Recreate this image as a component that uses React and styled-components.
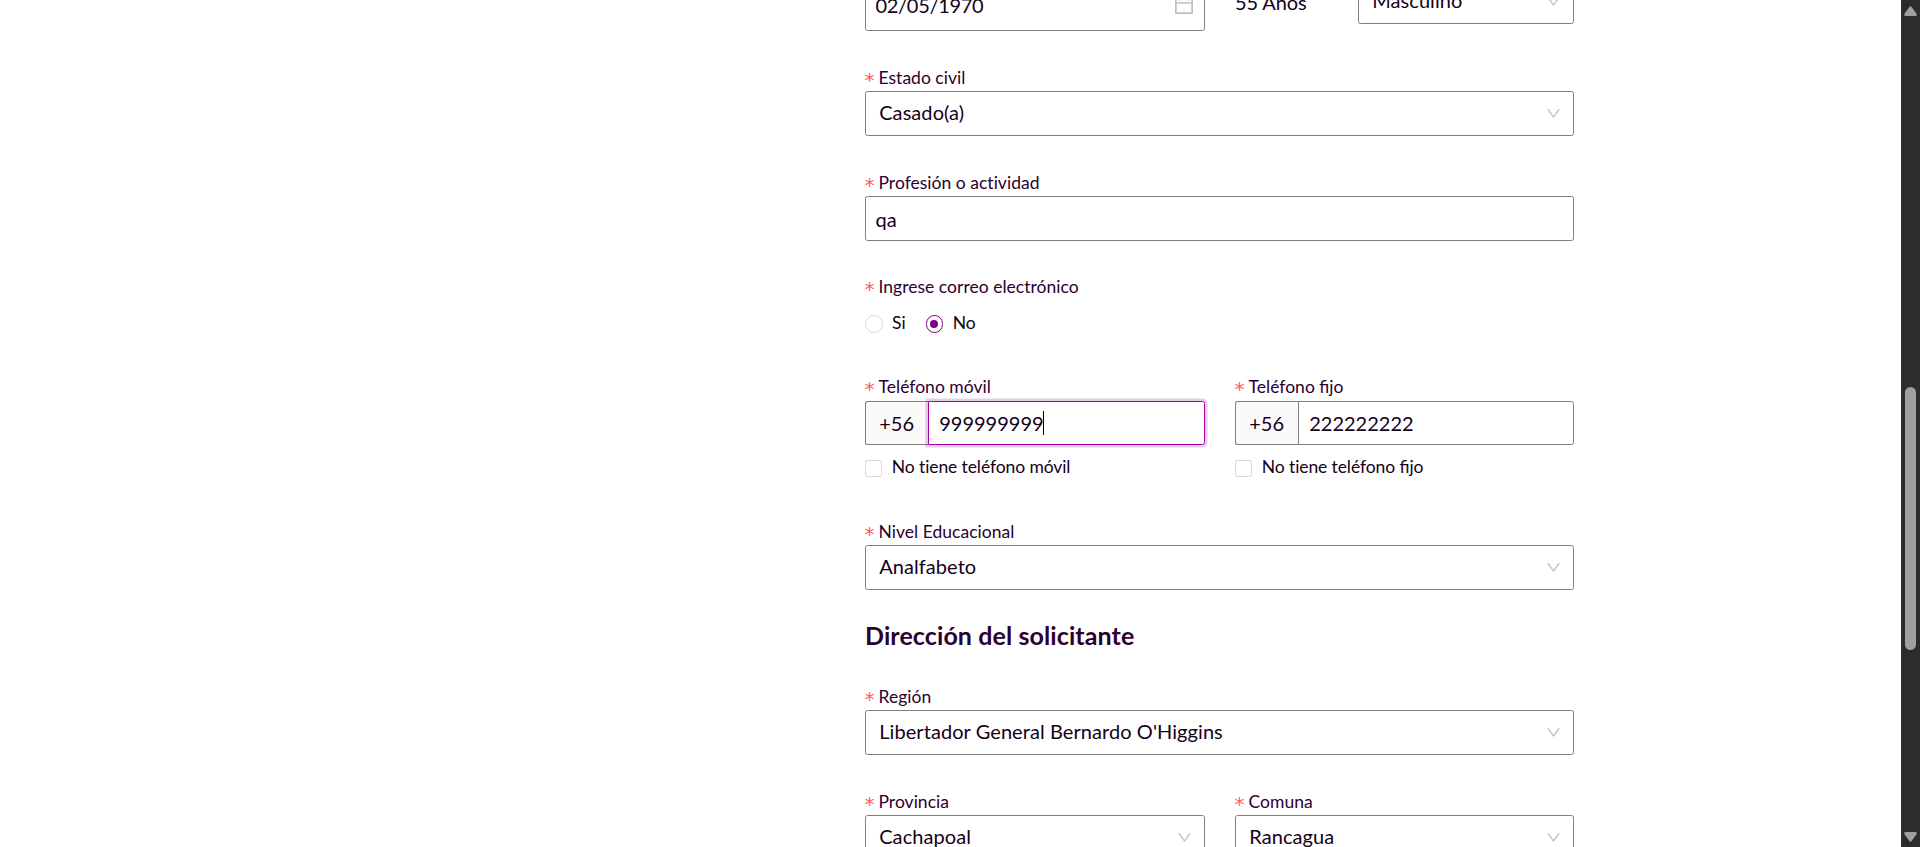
import React from "react";
import styled, { createGlobalStyle } from "styled-components";

const GlobalStyle = createGlobalStyle`
  * { box-sizing: border-box; }
  html, body { margin: 0; height: 100%; overflow: hidden; background: #fff; }
  body {
    font-family: Lato, "Open Sans", sans-serif;
    font-variant-ligatures: none;
    color: #150119;
  }
`;

const Page = styled.div`
  display: flex;
  height: 847px;
  overflow: hidden;
`;

const Content = styled.main`
  flex: 1;
  min-width: 0;
  height: 847px;
  overflow: hidden;
  padding-left: 865px;
`;

const Form = styled.form`
  width: 709px;
  margin-top: -21px;
  display: flex;
  flex-direction: column;
`;

const Row = styled.div`
  display: grid;
  grid-template-columns: 340px 339px;
  column-gap: 30px;
`;

const PersonRow = styled.div`
  display: grid;
  grid-template-columns: 340px 93px 216px;
  column-gap: 30px;
  align-items: start;
  height: 52px;
`;

const Field = styled.div`
  display: flex;
  flex-direction: column;
  min-width: 0;
  margin-top: ${(p) => p.$space || 0}px;
`;

const LabelRow = styled.label`
  display: flex;
  align-items: center;
  height: 24px;
  padding-top: 2px;
  margin-bottom: ${(p) => p.$gap ?? 2}px;
  font-size: 17.5px;
  line-height: 24px;
  letter-spacing: 0.02px;
  color: #2c0030;
  white-space: nowrap;
`;

const Required = styled.span`
  width: 14px;
  padding-top: 4px;
  font-family: "DejaVu Sans", sans-serif;
  font-size: 20px;
  line-height: 24px;
  color: #ff5c5f;
  margin-left: -0.5px;
`;

const Box = styled.div`
  display: flex;
  align-items: center;
  justify-content: space-between;
  height: ${(p) => p.$height || 45}px;
  padding: 0 ${(p) => p.$right ?? 12}px 0 ${(p) => p.$left ?? 13.2}px;
  border: 1px solid #7f7f7f;
  border-radius: 2.5px;
  background: #fff;
`;

const Value = styled.span`
  font-size: 20px;
  line-height: 24px;
  letter-spacing: ${(p) => p.$tracking || 0}px;
  padding-bottom: ${(p) => p.$lift ?? 4}px;
  white-space: nowrap;
`;

const Age = styled.span`
  padding-top: 11px;
  font-size: 20px;
  line-height: 24px;
  letter-spacing: -0.1px;
  white-space: nowrap;
`;

const Icon = styled.svg`
  flex: none;
  fill: #bfbfbf;
`;

const Options = styled.div`
  display: flex;
  align-items: flex-start;
  height: 24px;
`;

const Option = styled.label`
  display: flex;
  align-items: flex-start;
  gap: 9.5px;
  margin-right: 20px;
  font-size: 17.5px;
  line-height: 26px;
  white-space: nowrap;
`;

const CheckOption = styled(Option)`
  gap: 9.8px;
  margin-top: 9px;
  letter-spacing: -0.1px;
`;

const Ligated = styled.span`
  font-variant-ligatures: common-ligatures;
  letter-spacing: 0;
  white-space: pre;
`;

const Radio = styled.span`
  display: flex;
  align-items: center;
  justify-content: center;
  width: 17.5px;
  height: 17.5px;
  margin-top: 5px;
  border: 1px solid ${(p) => (p.$on ? "#7d0080" : "#d9d9d9")};
  border-radius: 50%;

  &::after {
    content: "";
    width: 8px;
    height: 8px;
    border-radius: 50%;
    background: ${(p) => (p.$on ? "#7d0080" : "transparent")};
  }
`;

const Check = styled.span`
  width: 17px;
  height: 17px;
  margin-top: 6px;
  border: 1px solid #d9d9d9;
  border-radius: 2px;
`;

const Group = styled.div`
  display: flex;
  height: 44px;
`;

const Addon = styled.div`
  display: flex;
  align-items: center;
  width: 63px;
  padding-left: 13.2px;
  border: 1px solid #7f7f7f;
  border-right: 0;
  border-radius: 2.5px 0 0 2.5px;
  background: #fafafa;
`;

const PhoneInput = styled.div`
  display: flex;
  align-items: center;
  flex: 1;
  padding-left: 10.2px;
  border: 1px solid ${(p) => (p.$focus ? "#a600a6" : "#7f7f7f")};
  border-radius: 0 2.5px 2.5px 0;
  box-shadow: ${(p) => (p.$focus ? "0 0 0 2.5px rgba(136, 0, 140, 0.2)" : "none")};
`;

const Caret = styled.span`
  width: 1px;
  height: 24px;
  margin-left: -1px;
  background: #000;
`;

const Heading = styled.h2`
  margin: 28px 0 0;
  height: 51px;
  font-size: 25px;
  line-height: 34px;
  font-weight: 700;
  letter-spacing: 0.1px;
  color: #2c0030;
`;

const Scrollbar = styled.aside`
  display: flex;
  flex-direction: column;
  align-items: center;
  width: 19px;
  height: 847px;
  padding: 6px 0 5px;
  background: #2c2c2c;
`;

const Thumb = styled.div`
  width: 11px;
  height: 263px;
  margin: 371px 0 auto;
  border-radius: 6px;
  background: #9f9f9f;
`;

const Arrow = ({ down }) => (
  <svg width="13" height="10" viewBox="0 0 13 10" fill="#9f9f9f">
    <path
      d="M5.2 1.2Q6.5-.5 7.8 1.2L12.5 7.8Q13.4 10 11.4 10H1.6Q-.4 10 .5 7.8Z"
      transform={down ? "rotate(180 6.5 5)" : undefined}
    />
  </svg>
);

const Chevron = () => (
  <Icon width="15" height="15" viewBox="64 64 896 896">
    <path d="M884 256h-75c-5.1 0-9.9 2.5-12.9 6.6L512 654.2 227.9 262.6c-3-4.1-7.8-6.6-12.9-6.6h-75c-6.5 0-10.3 7.4-6.5 12.7l352.6 486.1c12.8 17.6 39 17.6 51.7 0l352.6-486.1c3.9-5.3.1-12.7-6.4-12.7z" />
  </Icon>
);

const Calendar = () => (
  <Icon width="20" height="20" viewBox="64 64 896 896">
    <path d="M880 184H712v-64c0-4.4-3.6-8-8-8h-56c-4.4 0-8 3.6-8 8v64H384v-64c0-4.4-3.6-8-8-8h-56c-4.4 0-8 3.6-8 8v64H144c-17.7 0-32 14.3-32 32v664c0 17.7 14.3 32 32 32h736c17.7 0 32-14.3 32-32V216c0-17.7-14.3-32-32-32zm-40 656H184V460h656v380zM184 392V256h128v48c0 4.4 3.6 8 8 8h56c4.4 0 8-3.6 8-8v-48h256v48c0 4.4 3.6 8 8 8h56c4.4 0 8-3.6 8-8v-48h128v136H184z" />
  </Icon>
);

const Label = ({ children, gap }) => (
  <LabelRow $gap={gap}>
    <Required>*</Required>
    <span>{children}</span>
  </LabelRow>
);

const Select = ({ value }) => (
  <Box>
    <Value $tracking={0.07}>{value}</Value>
    <Chevron />
  </Box>
);

const Phone = ({ label, value, focus, none }) => (
  <Field $space={40}>
    <Label gap={3}>{label}</Label>
    <Group>
      <Addon>
        <Value $lift={1}>+56</Value>
      </Addon>
      <PhoneInput $focus={focus}>
        <Value $lift={1}>{value}</Value>
        {focus && <Caret />}
      </PhoneInput>
    </Group>
    <Options>
      <CheckOption>
        <Check />
        <span>{none}</span>
      </CheckOption>
    </Options>
  </Field>
);

export default function App() {
  return (
    <>
      <GlobalStyle />
      <Page>
        <Content>
          <Form>
            <PersonRow>
              <Box $height={52} $left={9.5} $right={10}>
                <Value $lift={0} $tracking={-0.3}>02/05/1970</Value>
                <Calendar />
              </Box>
              <Age>55 Años</Age>
              <Select value="Masculino" />
            </PersonRow>
            <Field $space={34}>
              <Label>Estado civil</Label>
              <Select value="Casado(a)" />
            </Field>
            <Field $space={34}>
              <Label>Profesión o actividad</Label>
              <Box $left={9.5}>
                <Value $lift={0}>qa</Value>
              </Box>
            </Field>
            <Field $space={33}>
              <Label gap={12}>Ingrese correo electrónico</Label>
              <Options>
                <Option>
                  <Radio />
                  Si
                </Option>
                <Option>
                  <Radio $on />
                  No
                </Option>
              </Options>
            </Field>
            <Row>
              <Phone label="Teléfono móvil" value="999999999" focus none="No tiene teléfono móvil" />
              <Phone
                label={<>Teléfono <Ligated>fijo</Ligated></>}
                value="222222222"
                none={<>No tiene teléfono <Ligated>fijo</Ligated></>}
              />
            </Row>
            <Field $space={50}>
              <Label>Nivel Educacional</Label>
              <Select value="Analfabeto" />
            </Field>
            <Heading>Dirección del solicitante</Heading>
            <Field $space={15}>
              <Label>Región</Label>
              <Select value="Libertador General Bernardo O'Higgins" />
            </Field>
            <Row>
              <Field $space={34}>
                <Label>Provincia</Label>
                <Select value="Cachapoal" />
              </Field>
              <Field $space={34}>
                <Label>Comuna</Label>
                <Select value="Rancagua" />
              </Field>
            </Row>
          </Form>
        </Content>
        <Scrollbar>
          <Arrow />
          <Thumb />
          <Arrow down />
        </Scrollbar>
      </Page>
    </>
  );
}
